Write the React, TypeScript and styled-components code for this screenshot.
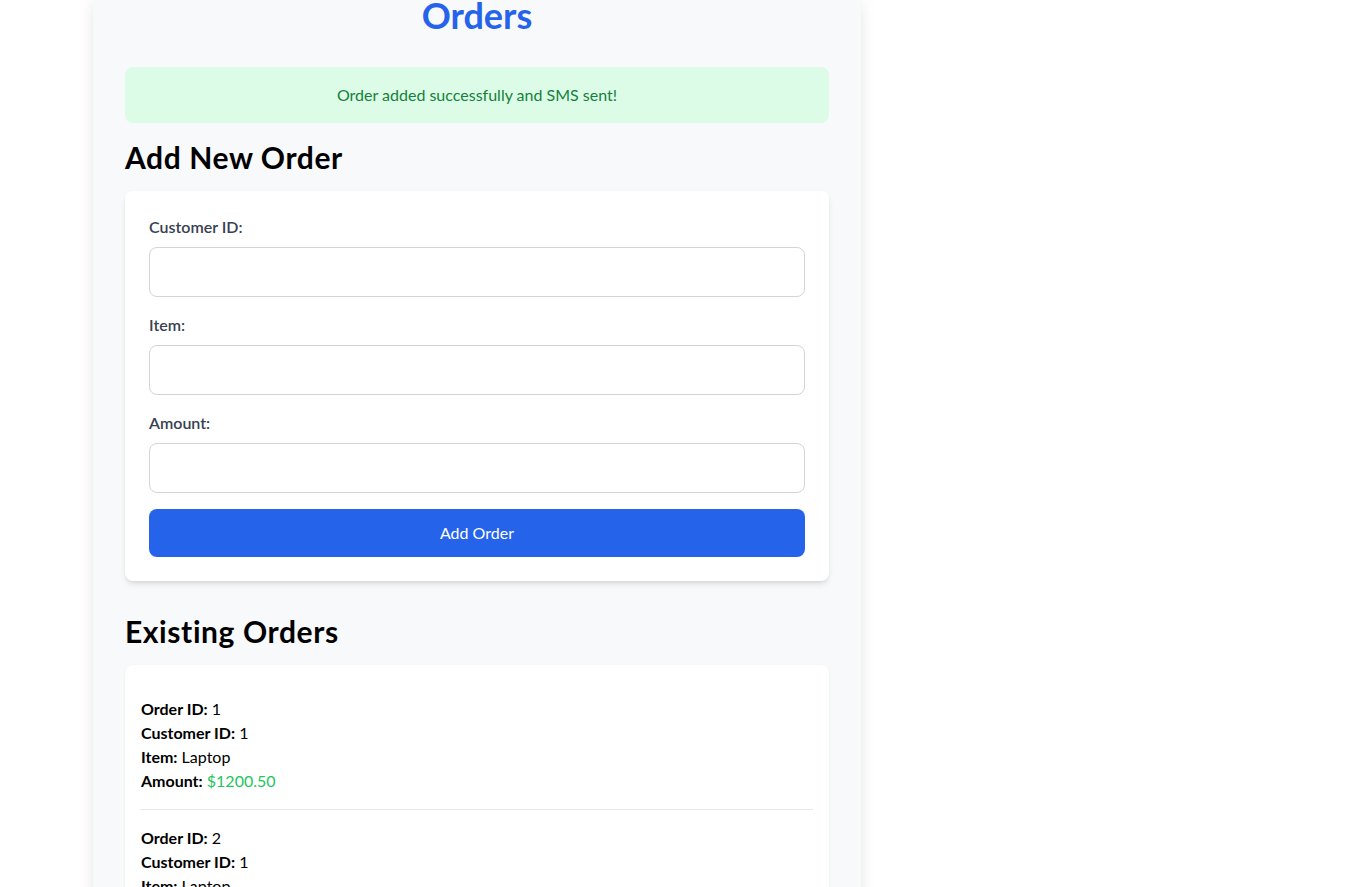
import React from "react";
import styled, { createGlobalStyle } from "styled-components";

const Global = createGlobalStyle`
  html, body { margin: 0; padding: 0; background: #ffffff; }
  body { font-family: "Lato", "Liberation Sans", sans-serif; color: #111827; }
  * { box-sizing: border-box; }
`;

const Page = styled.div`
  width: 768px;
  margin: -5px 0 0 93px;
  padding: 0 32px 32px;
  background: #f8f9fb;
  box-shadow: 0 10px 15px -3px rgba(0,0,0,0.08), 0 4px 6px -4px rgba(0,0,0,0.08), 0 0 18px rgba(0,0,0,0.05);
  min-height: 1000px;
`;

const Title = styled.h1`
  margin: 0 0 32px;
  font-size: 36px;
  line-height: 40px;
  font-weight: 700;
  color: #2563eb;
  text-align: center;
`;

const Alert = styled.div`
  background: #dcfce7;
  color: #15803d;
  border-radius: 8px;
  padding: 16px;
  font-size: 16px;
  line-height: 24px;
  text-align: center;
  margin-bottom: 16px;
`;

const SectionTitle = styled.h2`
  margin: 0 0 16px;
  font-size: 30px;
  line-height: 36px;
  font-weight: 700;
  letter-spacing: 0.6px;
  color: #000;
`;

const Section = styled.section<{ $gap?: number }>`
  margin-bottom: ${(p) => p.$gap ?? 0}px;
`;

const Card = styled.div<{ $pad: number; $shadow: string }>`
  background: #fff;
  border-radius: 8px;
  padding: ${(p) => p.$pad}px;
  box-shadow: ${(p) => p.$shadow};
`;

const Field = styled.div`
  margin-bottom: 16px;
`;

const Label = styled.label`
  display: block;
  font-size: 16px;
  line-height: 24px;
  font-weight: 600;
  color: #374151;
  margin-bottom: 8px;
`;

const Input = styled.input`
  display: block;
  width: 100%;
  height: 50px;
  padding: 12px 16px;
  border: 1px solid #d1d5db;
  border-radius: 8px;
  font-size: 16px;
  font-family: inherit;
  background: #fff;
  outline: none;
`;

const Button = styled.button`
  display: block;
  width: 100%;
  height: 48px;
  border: none;
  border-radius: 8px;
  background: #2563eb;
  color: #fff;
  font-family: inherit;
  font-size: 16px;
  line-height: 24px;
  cursor: pointer;
`;

const List = styled.ul`
  list-style: none;
  margin: 0;
  padding: 0;
`;

const Item = styled.li`
  padding: 16px 0;
  border-bottom: 1px solid #e5e7eb;
`;

const Line = styled.div`
  font-size: 16px;
  line-height: 24px;
  color: #000;
`;

const Key = styled.strong`
  font-weight: 700;
`;

const Money = styled.span`
  color: #22c55e;
`;

const orders = [
  { id: 1, customer: 1, item: "Laptop", amount: "1200.50" },
  { id: 2, customer: 1, item: "Laptop", amount: "1200.50" },
];

export default function App() {
  return (
    <>
      <Global />
      <Page>
        <Title>Orders</Title>
        <Alert>Order added successfully and SMS sent!</Alert>
        <Section $gap={32}>
          <SectionTitle>Add New Order</SectionTitle>
          <Card $pad={24} $shadow="0 4px 6px -1px rgba(0,0,0,0.1), 0 2px 4px -2px rgba(0,0,0,0.1)">
            <Field>
              <Label>Customer ID:</Label>
              <Input type="number" />
            </Field>
            <Field>
              <Label>Item:</Label>
              <Input type="text" />
            </Field>
            <Field>
              <Label>Amount:</Label>
              <Input type="number" />
            </Field>
            <Button>Add Order</Button>
          </Card>
        </Section>
        <Section>
          <SectionTitle>Existing Orders</SectionTitle>
          <Card $pad={16} $shadow="0 1px 3px rgba(0,0,0,0.06)">
            <List>
              {orders.map((o) => (
                <Item key={o.id}>
                  <Line><Key>Order ID:</Key> {o.id}</Line>
                  <Line><Key>Customer ID:</Key> {o.customer}</Line>
                  <Line><Key>Item:</Key> {o.item}</Line>
                  <Line><Key>Amount:</Key> <Money>${o.amount}</Money></Line>
                </Item>
              ))}
            </List>
          </Card>
        </Section>
      </Page>
    </>
  );
}
